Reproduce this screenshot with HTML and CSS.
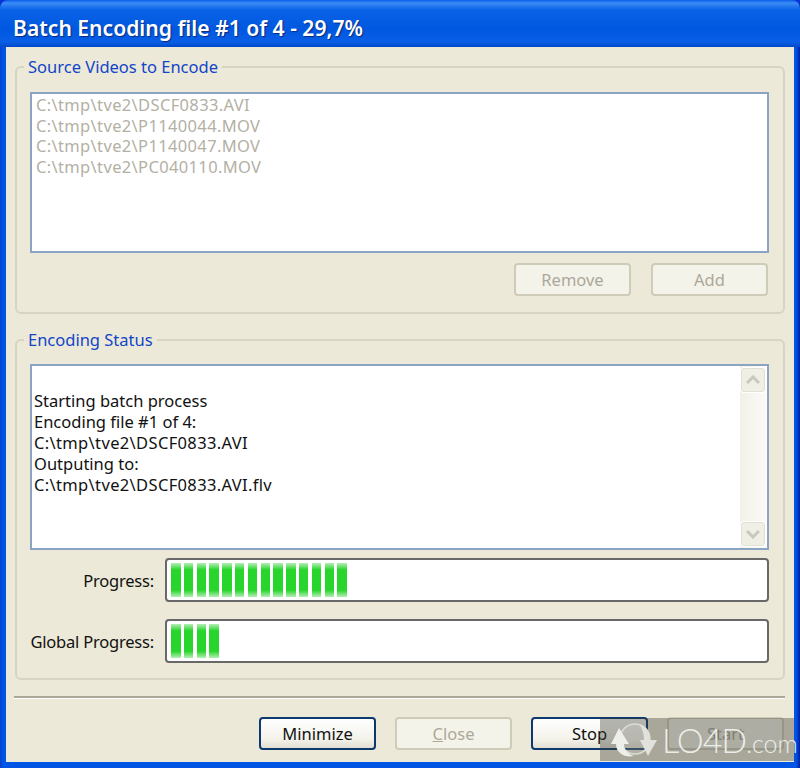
FILE: index.html
```html
<!DOCTYPE html>
<html lang="en">
<head>
    <meta charset="UTF-8">
    <title>Batch Encoding</title>
    <link rel="stylesheet" href="styles.css">
</head>
<body>
    <div class="window">
        <div class="titlebar">Batch Encoding file #1 of 4 - 29,7%</div>
        <div class="client">
            <fieldset class="group source">
                <legend>Source Videos to Encode</legend>
                <div class="box listbox">
                    <div>C:\tmp\tve2\DSCF0833.AVI</div>
                    <div>C:\tmp\tve2\P1140044.MOV</div>
                    <div>C:\tmp\tve2\P1140047.MOV</div>
                    <div>C:\tmp\tve2\PC040110.MOV</div>
                </div>
                <div class="list-buttons">
                    <button class="btn off" disabled>Remove</button>
                    <button class="btn off" disabled>Add</button>
                </div>
            </fieldset>

            <fieldset class="group status">
                <legend>Encoding Status</legend>
                <div class="box logbox">
                    <div class="log">
                        <div>Starting batch process</div>
                        <div>Encoding file #1 of 4:</div>
                        <div class="path">C:\tmp\tve2\DSCF0833.AVI</div>
                        <div>Outputing to:</div>
                        <div class="path">C:\tmp\tve2\DSCF0833.AVI.flv</div>
                    </div>
                    <div class="scrollbar">
                        <div class="arrow">
                            <svg width="16" height="10" viewBox="0 0 16 10"><path d="M2 8 L8 2 L14 8" fill="none" stroke="#c9c8bd" stroke-width="3"/></svg>
                        </div>
                        <div class="arrow">
                            <svg width="16" height="10" viewBox="0 0 16 10"><path d="M2 2 L8 8 L14 2" fill="none" stroke="#c9c8bd" stroke-width="3"/></svg>
                        </div>
                    </div>
                </div>
                <div class="progress-row">
                    <span class="progress-label">Progress:</span>
                    <div class="progress">
                        <i></i><i></i><i></i><i></i><i></i><i></i><i></i><i></i><i></i><i></i><i></i><i></i><i></i><i></i>
                    </div>
                </div>
                <div class="progress-row">
                    <span class="progress-label">Global Progress:</span>
                    <div class="progress">
                        <i></i><i></i><i></i><i></i>
                    </div>
                </div>
            </fieldset>

            <div class="separator"></div>

            <div class="actions">
                <button class="btn">Minimize</button>
                <button class="btn off" disabled><u>C</u>lose</button>
                <button class="btn">Stop</button>
                <button class="btn off" disabled>Start</button>
            </div>
        </div>

        <div class="watermark">
            <svg class="logo" width="54" height="40" viewBox="0 0 54 40">
                <circle cx="31" cy="19" r="15" fill="rgba(255,255,255,0.12)" stroke="#dcdcd6" stroke-width="1.5"/>
                <path d="M7 24 L15 8 L25 24 L20 24 C20 30 24 34 30 36 C22 38 12 34 12 24 Z" fill="#eeeeea"/>
                <path d="M35 4 C42 7 46 12 46 20 L53 20 L44 36 L36 20 L40 20 C40 13 38 8 35 4 Z" fill="#e2e2dd"/>
            </svg>
            <span>LO4D<small>.com</small></span>
        </div>
    </div>
</body>
</html>
```

FILE: styles.css
```css
* {
    box-sizing: border-box;
}
body {
    margin: 0;
    background: #0831d9;
}
.window {
    position: relative;
    width: 800px;
    height: 768px;
    padding: 0 6px 6px;
    overflow: hidden;
    font-family: "Noto Sans", sans-serif;
    font-size: 16.5px;
    background: linear-gradient(90deg, #0a3fd0 0, #0055e5 3px, #0055e5 796px, #001ea0 800px);
    border-radius: 8px 8px 0 0;
}
.titlebar {
    height: 47px;
    margin: 0 -6px;
    padding: 16px 0 0 13px;
    color: #fff;
    font-size: 21.1px;
    font-weight: 600;
    line-height: 24px;
    text-shadow: 1px 1px 1px #0a2a80;
    background: linear-gradient(180deg, #0a5ee8 0, #3b8cf5 3px, #0a62e6 10px, #0058e0 30px, #0a5ee6 42px, #0048c8 47px);
    border-radius: 8px 8px 0 0;
}
.client {
    height: 715px;
    padding: 10px 9px 0;
    background: #ece9d8;
}

.group {
    margin: 0;
    padding: 0 14px 0 13px;
    border: 2px solid #d8d4c2;
    border-radius: 6px;
}
.group legend {
    margin-left: -6px;
    padding: 0 4px;
    color: #1246c8;
    line-height: 20px;
}
.source {
    height: 257px;
}
.status {
    height: 350px;
    margin-top: 16px;
}

.box {
    background: #fff;
    border: 2px solid #8ba4c4;
}
.listbox {
    height: 161px;
    margin-top: 15px;
    padding: 1px 4px;
    color: #b3b0a4;
    letter-spacing: 0.35px;
    line-height: 20.7px;
}
.list-buttons {
    display: flex;
    justify-content: flex-end;
    gap: 20px;
    margin-top: 10px;
    padding-right: 1px;
}

.btn {
    width: 117px;
    height: 33px;
    padding: 0;
    color: #111;
    font: inherit;
    background: linear-gradient(180deg, #fff, #f3f2ea 70%, #e2dfd2);
    border: 2px solid #0c3a6e;
    border-radius: 4px;
}
.btn.off {
    color: #aca899;
    background: #f4f3ea;
    border-color: #cfcbb9;
}

.logbox {
    display: flex;
    justify-content: space-between;
    height: 186px;
    margin-top: 14px;
}
.log {
    padding: 24px 2px 0;
    color: #111;
    line-height: 21px;
}
.path {
    letter-spacing: 0.35px;
}
.scrollbar {
    display: flex;
    flex-direction: column;
    justify-content: space-between;
    width: 26px;
    margin-right: 1px;
    padding: 2px 1px;
    background: linear-gradient(90deg, #f2f1e8, #fbfaf6);
}
.arrow {
    display: flex;
    align-items: center;
    justify-content: center;
    height: 24px;
    background: #f0efe6;
    border: 1px solid #e2e0d4;
    border-radius: 3px;
    box-shadow: 0 0 0 1px #fff;
}

.progress-row {
    display: flex;
    align-items: center;
    gap: 11px;
    height: 44px;
    margin-top: 8px;
}
.progress-row + .progress-row {
    margin-top: 17px;
}
.progress-label {
    flex: 0 0 124px;
    color: #111;
    letter-spacing: -0.2px;
    text-align: right;
    white-space: nowrap;
}
.progress {
    display: flex;
    flex: 1;
    gap: 3.3px;
    height: 44px;
    padding: 3px 4px;
    background: #fff;
    border: 2px solid #686868;
    border-radius: 4px;
}
.progress i {
    width: 9.5px;
    background: linear-gradient(180deg, #b4efb4, #28d52c 20%, #28d52c 80%, #b4efb4);
}

.separator {
    height: 2px;
    margin: 16px 0 0 -1px;
    background: #aca899;
    box-shadow: 0 1px 0 #fff;
}
.actions {
    display: flex;
    justify-content: flex-end;
    gap: 19px;
    margin-top: 19px;
    margin-right: 1px;
}

/* site stamp over the corner of the screenshot */
.watermark {
    position: absolute;
    left: 600px;
    top: 718px;
    display: flex;
    align-items: center;
    width: 194px;
    height: 43px;
    padding-left: 4px;
    color: #ecece8;
    font-family: Lato, sans-serif;
    font-size: 34px;
    font-weight: 300;
    letter-spacing: -1px;
    white-space: nowrap;
    background: rgba(60, 60, 50, 0.38);
}
.logo {
    flex: none;
    margin-right: 4px;
}
.watermark small {
    font-size: 25px;
    letter-spacing: 0;
}
```
